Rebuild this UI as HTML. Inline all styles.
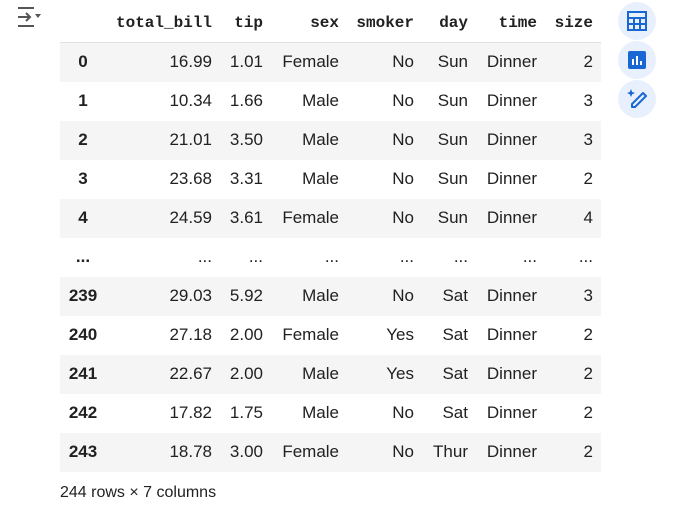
<!DOCTYPE html>
<html><head><meta charset="utf-8"><style>
body{margin:0;width:679px;height:509px;background:#fff;position:relative;font-family:"Liberation Sans",Arial,sans-serif;color:#212121;overflow:hidden}
table{position:absolute;left:60px;top:4px;border-collapse:collapse;table-layout:fixed;width:541px}
th{font-family:"Liberation Mono",monospace;font-weight:bold;font-size:16px;height:38px;text-align:right;padding:0 8px 0 0;border-bottom:1px solid #e0e0e0;color:#212121}
td{font-size:17px;height:39px;text-align:right;padding:0 8px 0 0;box-sizing:border-box}
td:first-child{text-align:center;font-weight:bold;padding:0}
tbody tr:nth-child(odd){background:#f5f5f5}
.foot{position:absolute;left:60px;top:484px;font-size:16px}
.c{position:absolute;left:618px;width:38px;height:38px;border-radius:50%;background:#e8f0fe}
.c svg{position:absolute;left:7px;top:7px}
</style></head><body>
<svg style="position:absolute;left:16px;top:7px" width="26" height="20" viewBox="0 0 26 20"><g stroke="#555" stroke-width="2" fill="none"><path d="M2 1h16M2 19h16M2 10h12M10 6l4 4-4 4"/></g><path d="M19 7h6l-3 4z" fill="#555"/></svg>
<table>
<colgroup><col style="width:46px"><col style="width:114px"><col style="width:51px"><col style="width:76px"><col style="width:75px"><col style="width:54px"><col style="width:69px"><col style="width:56px"></colgroup>
<thead><tr><th></th><th>total_bill</th><th>tip</th><th>sex</th><th>smoker</th><th>day</th><th>time</th><th>size</th></tr></thead>
<tbody>
<tr><td>0</td><td>16.99</td><td>1.01</td><td>Female</td><td>No</td><td>Sun</td><td>Dinner</td><td>2</td></tr>
<tr><td>1</td><td>10.34</td><td>1.66</td><td>Male</td><td>No</td><td>Sun</td><td>Dinner</td><td>3</td></tr>
<tr><td>2</td><td>21.01</td><td>3.50</td><td>Male</td><td>No</td><td>Sun</td><td>Dinner</td><td>3</td></tr>
<tr><td>3</td><td>23.68</td><td>3.31</td><td>Male</td><td>No</td><td>Sun</td><td>Dinner</td><td>2</td></tr>
<tr><td>4</td><td>24.59</td><td>3.61</td><td>Female</td><td>No</td><td>Sun</td><td>Dinner</td><td>4</td></tr>
<tr><td>...</td><td>...</td><td>...</td><td>...</td><td>...</td><td>...</td><td>...</td><td>...</td></tr>
<tr><td>239</td><td>29.03</td><td>5.92</td><td>Male</td><td>No</td><td>Sat</td><td>Dinner</td><td>3</td></tr>
<tr><td>240</td><td>27.18</td><td>2.00</td><td>Female</td><td>Yes</td><td>Sat</td><td>Dinner</td><td>2</td></tr>
<tr><td>241</td><td>22.67</td><td>2.00</td><td>Male</td><td>Yes</td><td>Sat</td><td>Dinner</td><td>2</td></tr>
<tr><td>242</td><td>17.82</td><td>1.75</td><td>Male</td><td>No</td><td>Sat</td><td>Dinner</td><td>2</td></tr>
<tr><td>243</td><td>18.78</td><td>3.00</td><td>Female</td><td>No</td><td>Thur</td><td>Dinner</td><td>2</td></tr>
</tbody></table>
<div class="foot">244 rows × 7 columns</div>
<div class="c" style="top:2px"><svg width="24" height="24" viewBox="0 0 24 24"><g stroke="#1967d2" stroke-width="2" fill="none"><rect x="3" y="3" width="18" height="18"/><path d="M3 9h18M3 15h18M9 9v12M15 9v12"/></g></svg></div>
<div class="c" style="top:41px"><svg width="24" height="24" viewBox="0 0 24 24"><rect x="3" y="3" width="18" height="18" rx="2" fill="#1967d2"/><path d="M8 11v6M12 8v9M16 13v4" stroke="#fff" stroke-width="2"/></svg></div>
<div class="c" style="top:80px"><svg width="24" height="24" viewBox="0 0 24 24"><path d="M6 2l1.2 3L10 6 7.2 7.2 6 10 4.8 7.2 2 6l2.8-1z" fill="#1967d2"/><path d="M18 6l3 3L10 20H7v-3z" stroke="#1967d2" stroke-width="2" fill="none" stroke-linejoin="round"/></svg></div>
</body></html>
